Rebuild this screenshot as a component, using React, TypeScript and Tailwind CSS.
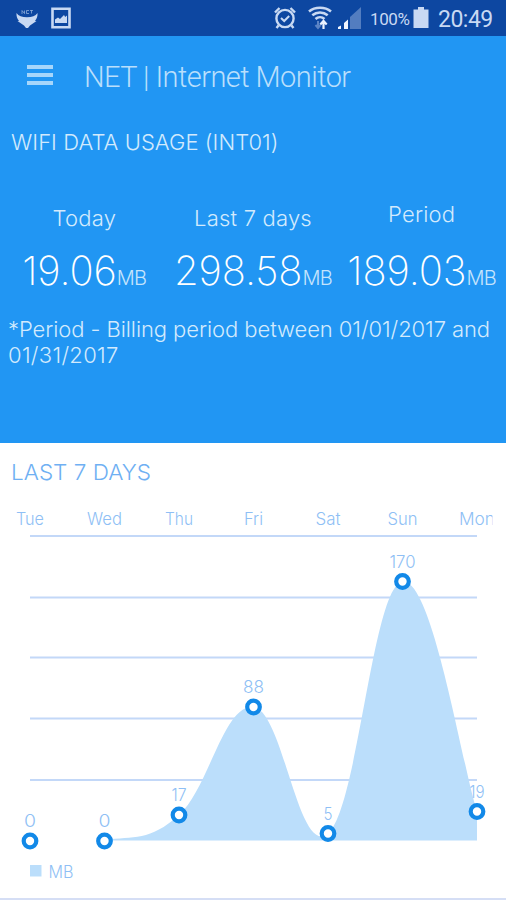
import clsx from 'clsx'

type Point = {
  day: string
  value: number
  x: number
  y: number
}

const points: Point[] = [
  { day: 'Tue', value: 0, x: 30, y: 397 },
  { day: 'Wed', value: 0, x: 104.5, y: 397 },
  { day: 'Thu', value: 17, x: 179, y: 371 },
  { day: 'Fri', value: 88, x: 253.5, y: 263 },
  { day: 'Sat', value: 5, x: 328, y: 389.5 },
  { day: 'Sun', value: 170, x: 402.5, y: 137.5 },
  { day: 'Mon', value: 19, x: 477, y: 367.5 },
]

const gridLines = [92, 153.5, 213.5, 274.5, 336]
const baseline = 396.5

const labelWidth: Record<string, number> = {
  Tue: 28,
  Wed: 35,
  Thu: 28,
  Fri: 19,
  Sat: 25,
  Sun: 30,
  Mon: 36,
}

const valueWidth: Record<string, number> = {
  Tue: 12,
  Wed: 12,
  Thu: 15,
  Fri: 21,
  Sat: 9,
  Sun: 26,
  Mon: 15,
}

// cubic smoothing, the first two points sit on the baseline
function areaPath() {
  const k = 0.2
  let d = `M${points[1].x} ${points[1].y - 1}`
  for (let i = 2; i < points.length; i++) {
    const before = points[i - 2]
    const prev = points[i - 1]
    const cur = points[i]
    const next = points[i + 1] ?? cur
    const c1x = prev.x + (cur.x - before.x) * k
    const c1y = prev.y + (cur.y - before.y) * k
    const c2x = cur.x - (next.x - prev.x) * k
    const c2y = cur.y - (next.y - prev.y) * k
    d += ` C${c1x} ${c1y} ${c2x} ${c2y} ${cur.x} ${cur.y}`
  }
  return `${d} L477 ${baseline} L${points[1].x} ${baseline} Z`
}

function StatusBar() {
  return (
    <div className="flex h-9 shrink-0 items-center bg-[#0d47a1] text-[#c8d9f3]">
      {/* --- Notifikasi --- */}
      <svg className="ml-4 h-6 w-[22px] shrink-0" viewBox="0 0 22 24" fill="currentColor">
        <path d="M.5 7c2 3 5.500 4.200 10.500 4.200S19.500 10 21.500 7c.3 3-.8 6-2.500 8h1.500L14 19.500l-2 2.500h-2l-2-2.500L1.500 15H3C1.300 13 .2 10 .5 7Z" />
        <path
          d="M6 8V4.500l2.500 3V4.500M13 4.500h-2.500V7.500H13M14 4.500h3M15.500 4.500v3"
          fill="none"
          stroke="currentColor"
          strokeWidth=".9"
          opacity=".6"
        />
      </svg>
      <svg className="ml-[13px] h-[22px] w-5 shrink-0" viewBox="0 0 20 22">
        <path
          d="M1.500 1.800h17v18.400h-17z"
          fill="none"
          stroke="currentColor"
          strokeWidth="2.600"
        />
        <path d="M4 16V12.500l3-2 2 1.500 4-4 1.200 2L16 8.500V16Z" fill="currentColor" />
      </svg>

      {/* --- Sistem --- */}
      <svg
        className="ml-[203px] h-6 w-[22px] shrink-0"
        viewBox="0 0 22 24"
        fill="none"
        stroke="currentColor"
        strokeWidth="2.400"
      >
        <circle cx="11" cy="12.500" r="8.600" />
        <path d="m7 12 3.200 3 5-5" strokeWidth="2" />
        <path d="M1 6.500 5.500 2M21 6.500 16.500 2M4.500 19.500l-2 2.500M17.500 19.500l2 2.500" />
      </svg>
      <svg
        className="ml-3 h-6 w-6 shrink-0"
        viewBox="0 0 24 24"
        fill="none"
        stroke="currentColor"
        strokeWidth="2.600"
      >
        <path d="M1 5.500c6-5 16-5 22 0M4.300 9.300c4.500-3.800 10.900-3.800 15.400 0M7.500 13c2.600-2.300 6.400-2.300 9 0" />
        <path d="M10 15v6.500M7.500 19l2.500 3 2.500-3" stroke="#5c84c5" strokeWidth="2" />
        <path d="M15.500 23v-7M12.300 18.500l3.200-3.500 3.200 3.500" stroke="#eaf2ff" strokeWidth="2.200" />
      </svg>
      <svg className="ml-[5px] h-6 w-6 shrink-0" viewBox="0 0 24 24">
        <path d="M13 11 24 1v22H13z" fill="#537dc0" />
        <path d="M1 23v-2l3-1.500V23zM7 23v-6l4-3.500V23z" fill="#f0f5ff" />
      </svg>
      <span className="ml-[9px] w-[40px] whitespace-nowrap pt-0.5 font-[Roboto] text-[17px] leading-none tracking-[-0.4px]">
        100%
      </span>
      <svg className="ml-[3px] h-6 w-4 shrink-0" viewBox="0 0 16 24" fill="currentColor">
        <path d="M5 1h6v2.500h4.500V22H.5V3.500H5z" />
      </svg>
      <span className="ml-[9px] whitespace-nowrap pt-[3px] font-[Roboto] text-[23px] leading-none tracking-[-0.5px]">
        20:49
      </span>
    </div>
  )
}

function AppBar() {
  return (
    <div className="flex h-[79px] items-center">
      <div className="mb-0.5 ml-[27px] flex w-[26px] flex-col gap-1">
        <span className="h-1 bg-[#a6d6fb]" />
        <span className="h-1 bg-[#a6d6fb]" />
        <span className="h-1 bg-[#a6d6fb]" />
      </div>
      <h1 className="ml-[31px] whitespace-nowrap pt-[3px] font-[Roboto] text-[29px] font-light leading-none tracking-[-0.55px] text-[#b9dffc]">
        NET | Internet Monitor
      </h1>
    </div>
  )
}

function Usage({
  label,
  value,
  isRaised = false,
}: {
  label: string
  value: string
  isRaised?: boolean
}) {
  return (
    <div className="flex flex-col items-center whitespace-nowrap">
      <p
        className={clsx('h-[39px] text-[22px] font-light leading-7 tracking-[0.2px]', {
          'pt-1': !isRaised,
        })}
      >
        {label}
      </p>
      <p className="text-[40px] font-extralight leading-[64px] tracking-[-0.1px] text-white">
        {value}
        <span className="text-[20px] font-light tracking-[-0.7px] text-[#c5e4fc]">MB</span>
      </p>
    </div>
  )
}

function Chart() {
  return (
    <svg
      className="block h-[455px] w-full"
      viewBox="0 -1 506 455"
      fontFamily="Inter, sans-serif"
      fontWeight="300"
      fill="#8fbff5"
    >
      <text
        x="11"
        y="35.500"
        fontSize="22"
        textLength="140"
        lengthAdjust="spacingAndGlyphs"
        fill="#6fb0f3"
      >
        LAST 7 DAYS
      </text>
      {gridLines.map((y) => (
        <path key={y} d={`M30 ${y}H477`} stroke="#c3d8f8" strokeWidth="1.800" />
      ))}
      <path d={areaPath()} fill="#bbdefb" />
      <clipPath id="plot">
        <path d="M0 0h492.500v456H0z" />
      </clipPath>
      <g clipPath="url(#plot)" textAnchor="middle" fontSize="17">
        {points.map((item) => (
          <text
            key={item.day}
            x={item.x}
            y="80.500"
            textLength={labelWidth[item.day]}
            lengthAdjust="spacingAndGlyphs"
          >
            {item.day}
          </text>
        ))}
        {points.map((item) => (
          <text
            key={item.day}
            x={item.x}
            y={item.y - 14}
            textLength={valueWidth[item.day]}
            lengthAdjust="spacingAndGlyphs"
          >
            {item.value}
          </text>
        ))}
      </g>
      {points.map((item) => (
        <circle
          key={item.day}
          cx={item.x}
          cy={item.y}
          r="6.300"
          fill="#fff"
          stroke="#1289e8"
          strokeWidth="4.200"
        />
      ))}
      <path d="M30 421h11.500v11.500H30z" fill="#bbdefb" />
      <text x="48.500" y="434" fontSize="17" textLength="25" lengthAdjust="spacingAndGlyphs">
        MB
      </text>
    </svg>
  )
}

export default function App() {
  return (
    <div className="flex h-[900px] w-[506px] flex-col overflow-hidden bg-white font-[Inter,sans-serif]">
      <StatusBar />
      <div className="flex h-[407px] shrink-0 flex-col bg-[#2196f3] text-[#d2eafd]">
        <AppBar />
        <h2 className="ml-[11px] mt-[13px] whitespace-nowrap text-[22px] font-light leading-7 tracking-[0.05px]">
          WIFI DATA USAGE (INT01)
        </h2>
        <div className="mt-11 grid grid-cols-3">
          <Usage label="Today" value="19.06" />
          <Usage label="Last 7 days" value="298.58" />
          <Usage label="Period" value="189.03" isRaised />
        </div>
        <p className="ml-2 mt-[7px] whitespace-nowrap text-[22px] font-light leading-[25.5px] tracking-[-0.08px]">
          *Period - Billing period between 01/01/2017 and
          <br />
          <span className="tracking-[0.3px]">01/31/2017</span>
        </p>
      </div>
      <div className="border-b-2 border-[#d5def5]">
        <Chart />
      </div>
    </div>
  )
}
